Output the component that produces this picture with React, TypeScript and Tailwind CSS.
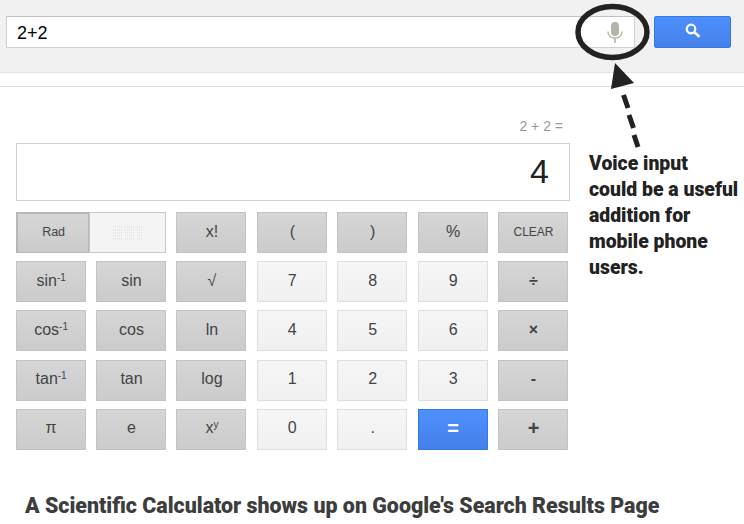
const sans = "font-['Liberation_Sans',Arial,sans-serif]";
const heavy = "font-['Roboto','Liberation_Sans',sans-serif] font-black";

function Sup({ base, sup }: { base: string; sup: string }) {
  return (
    <span>
      {base}
      <sup className="text-[10px] leading-none relative -top-[5px] align-baseline">{sup}</sup>
    </span>
  );
}

function Key({ kind = "fn", children, small }: { kind?: "fn" | "num" | "eq"; children: React.ReactNode; small?: boolean }) {
  const look = {
    fn: "border-[#c3c3c3] bg-gradient-to-b from-[#d6d6d6] to-[#cbcbcb] text-[#444]",
    num: "border-[#dedede] bg-gradient-to-b from-[#f6f6f6] to-[#f0f0f0] text-[#444]",
    eq: "border-[#3079ed] bg-gradient-to-b from-[#4d90fe] to-[#4580e8] text-white font-bold",
  }[kind];
  return (
    <div className={`h-[41px] pb-[2px] pl-[1px] flex items-center justify-center border ${small ? "text-xs" : "text-base"} ${look}`}>
      {children}
    </div>
  );
}

function Mic() {
  return (
    <svg width="18" height="21" viewBox="0 0 18 21" className="shrink-0">
      <rect x="5" y="0" width="8" height="14" rx="4" fill="#b5b3aa" />
      <path d="M2 9.5c0 4 3 6.5 7 6.5s7-2.500 7-6.500" fill="none" stroke="#b5b3aa" strokeWidth="1.500" />
      <rect x="8.200" y="16" width="1.600" height="5" fill="#b5b3aa" />
    </svg>
  );
}

function SearchGlyph() {
  return (
    <svg width="16" height="15" viewBox="0 0 16 15" className="-translate-y-[2px]">
      <circle cx="6" cy="6" r="4.300" fill="none" stroke="white" strokeWidth="2.200" />
      <path d="M9.500 9.500L14.500 13.800" stroke="white" strokeWidth="2.600" />
    </svg>
  );
}

function Dots() {
  return (
    <svg width="29" height="16" viewBox="0 0 29 16">
      {[1, 4, 7, 10, 13].map((y) =>
        [0, 2, 4, 6, 8, 12, 14, 16, 18, 20, 24, 26, 28].map((x) => (
          <rect key={`${x}-${y}`} x={x} y={y} width="1" height="1.500" fill="#e2e2e2" />
        )),
      )}
    </svg>
  );
}

function Annotation() {
  return (
    <svg className="absolute left-0 top-0 pointer-events-none" width="744" height="160" viewBox="0 0 744 160">
      <ellipse cx="612.500" cy="32" rx="34.500" ry="25.500" fill="none" stroke="#222" strokeWidth="5.500" />
      <polygon points="615,63 634,83 611,89" fill="#222" />
      <path d="M623.500 95L628 108M629 115L633.500 128M634 135L638 147" stroke="#222" strokeWidth="5" fill="none" />
    </svg>
  );
}

export default function App() {
  return (
    <div className={`relative w-[744px] h-[524px] overflow-hidden bg-white ${sans}`}>
      <div className="h-[73px] bg-[#f1f1f1] border-b border-[#e3e3e3] pt-4 pl-[6px] flex">
        <div className="w-[629px] h-8 bg-white border border-[#d0d0d0] border-t-[#c0c0c0] flex items-center justify-between pl-[10px] pr-[10px]">
          <span className="text-[18px] text-black pt-[2px]">2+2</span>
          <Mic />
        </div>
        <div className="ml-[19px] w-[77px] h-8 rounded-[2px] border border-[#3079ed] bg-gradient-to-b from-[#4d90fe] to-[#4580e8] flex items-center justify-center">
          <SearchGlyph />
        </div>
      </div>

      <div className="mt-[13px] border-t border-[#dfdfdf]" />

      <div className="flex pl-4 pt-[31px]">
        <div className="w-[554px]">
          <div className="pr-[7px] text-right text-[14px] leading-4 text-[#999]">2 + 2 =</div>
          <div className="mt-[9px] h-[58px] pb-[2px] border border-[#d0d0d0] flex items-center justify-end pr-[20px] text-[34px] text-[#222]">4</div>
          <div className="mt-[11px] -ml-[0.4px] w-[552.400px] grid grid-cols-7 gap-x-[10.400px] gap-y-[8.200px]">
            <div className="col-span-2 h-[41px] flex">
              <div className="w-[73px] pl-[2px] pb-[2px] flex items-center justify-center border border-[#b8b8b8] border-l-2 border-t-2 bg-gradient-to-b from-[#d6d6d6] to-[#cbcbcb] text-[12.500px] text-[#444]">Rad</div>
              <div className="flex-1 flex items-center justify-center border border-[#c8c8c8] bg-[#f4f4f4]"><Dots /></div>
            </div>
            <Key>x!</Key>
            <Key>(</Key>
            <Key>)</Key>
            <Key>%</Key>
            <Key small>CLEAR</Key>

            <Key><Sup base="sin" sup="-1" /></Key>
            <Key>sin</Key>
            <Key>√</Key>
            <Key kind="num">7</Key>
            <Key kind="num">8</Key>
            <Key kind="num">9</Key>
            <Key><b>÷</b></Key>

            <Key><Sup base="cos" sup="-1" /></Key>
            <Key>cos</Key>
            <Key>ln</Key>
            <Key kind="num">4</Key>
            <Key kind="num">5</Key>
            <Key kind="num">6</Key>
            <Key><b>×</b></Key>

            <Key><Sup base="tan" sup="-1" /></Key>
            <Key>tan</Key>
            <Key>log</Key>
            <Key kind="num">1</Key>
            <Key kind="num">2</Key>
            <Key kind="num">3</Key>
            <Key><b>-</b></Key>

            <Key>π</Key>
            <Key>e</Key>
            <Key><Sup base="x" sup="y" /></Key>
            <Key kind="num">0</Key>
            <Key kind="num">.</Key>
            <Key kind="eq"><span className="text-xl">=</span></Key>
            <Key><b className="text-xl">+</b></Key>
          </div>
        </div>
        <div className={`ml-[19px] pt-[33px] text-[19.400px] leading-[26px] whitespace-nowrap text-[#222] ${heavy}`}>
          Voice input<br />could be a useful<br />addition for<br />mobile phone<br />users.
        </div>
      </div>

      <div className={`mt-[44px] pl-[25px] text-[21.400px] leading-6 whitespace-nowrap text-[#3d3d3d] ${heavy}`}>
        A Scientific Calculator shows up on Google's Search Results Page
      </div>

      <Annotation />
    </div>
  );
}
